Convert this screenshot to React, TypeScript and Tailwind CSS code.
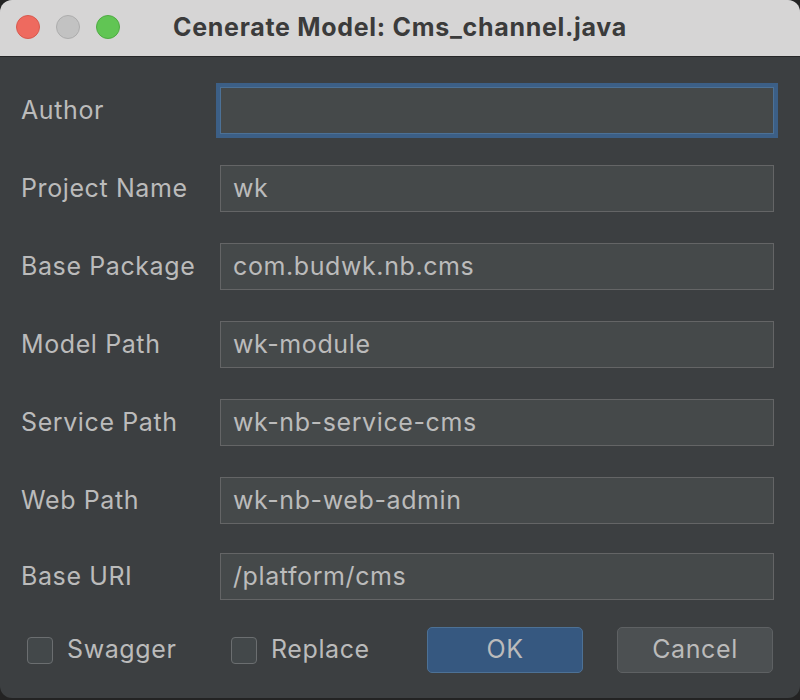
const fields: { label: string; value: string; focused?: boolean }[] = [
  { label: "Author", value: "", focused: true },
  { label: "Project Name", value: "wk" },
  { label: "Base Package", value: "com.budwk.nb.cms" },
  { label: "Model Path", value: "wk-module" },
  { label: "Service Path", value: "wk-nb-service-cms" },
  { label: "Web Path", value: "wk-nb-web-admin" },
  { label: "Base URI", value: "/platform/cms" },
];

function Checkbox({ label, className }: { label: string; className?: string }) {
  return (
    <label className={"flex items-center gap-[14px] " + (className ?? "")}>
      <span className="h-[27px] w-[26px] rounded-[4px] border border-[#6b6e70] bg-[#43484a]" />
      <span className="text-[25px] tracking-[0.6px] text-[#bbbbbb]">{label}</span>
    </label>
  );
}

export default function App() {
  return (
    <div
      className="h-[700px] w-[800px] bg-[#232323]"
      style={{ fontFamily: "Inter, 'Noto Sans', sans-serif" }}
    >
      <div className="flex h-[698px] w-[800px] flex-col overflow-hidden rounded-[12px] bg-[#3c3f41]">
        {/* title bar */}
        <div className="relative flex h-[56px] shrink-0 items-center justify-center bg-[#d6d5d5]">
          <div className="absolute left-[16px] top-[15px] flex gap-[16px]">
            <span className="h-[24px] w-[24px] rounded-full border border-[#d75a4f] bg-[#ee6a5f]" />
            <span className="h-[24px] w-[24px] rounded-full border border-[#adadad] bg-[#c2c2c2]" />
            <span className="h-[24px] w-[24px] rounded-full border border-[#4fab43] bg-[#61c554]" />
          </div>
          <span className="text-[25px] font-bold tracking-[0.7px] text-[#3b3b3b]">
            Cenerate Model: Cms_channel.java
          </span>
        </div>
        <div className="h-px shrink-0 bg-[#262728]" />

        {/* form */}
        <div className="flex flex-col gap-[31px] pl-[21px] pr-[26px] pt-[30px]">
          {fields.map((f, i) => (
            <div
              key={f.label}
              className={i === fields.length - 1 ? "-mt-[2px] flex h-[47px] items-center" : "flex h-[47px] items-center"}
            >
              <span className="w-[199px] pt-[1px] text-[25px] tracking-[0.6px] text-[#bbbbbb]">{f.label}</span>
              <div
                className={
                  f.focused
                    ? "flex h-[47px] flex-1 items-center border border-[#4c7196] bg-[#45494a] px-[12px] ring-[4px] ring-[#3c5f86]"
                    : "flex h-[47px] flex-1 items-center border border-[#646566] bg-[#45494a] px-[12px]"
                }
              >
                <span className="text-[25px] tracking-[0.6px] text-[#bbbbbb]">{f.value}</span>
              </div>
            </div>
          ))}
        </div>

        {/* footer */}
        <div className="mt-[27px] flex items-center pl-[27px] pr-[26px]">
          <div className="flex w-[400px] items-center">
            <Checkbox label="Swagger" className="w-[204px]" />
            <Checkbox label="Replace" />
          </div>
          <div className="flex gap-[34px]">
            <button className="h-[46px] w-[156px] rounded-[5px] border border-[#4d7195] bg-[#365880] text-[25px] tracking-[0.6px] text-[#bbbbbb]">
              OK
            </button>
            <button className="h-[46px] w-[156px] rounded-[5px] border border-[#5e6163] bg-[#4c5052] text-[25px] tracking-[0.6px] text-[#bbbbbb]">
              Cancel
            </button>
          </div>
        </div>
      </div>
    </div>
  );
}
